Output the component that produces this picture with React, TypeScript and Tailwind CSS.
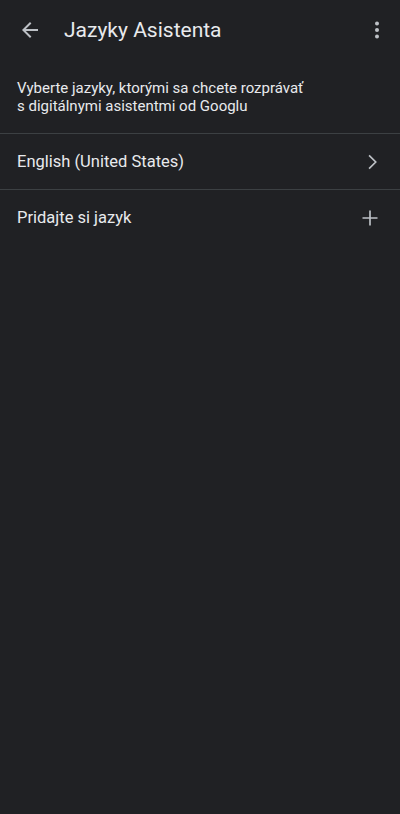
export default function App() {
  return (
    <div className="min-h-[814px] w-[400px] bg-[#202124] text-[#e8eaed] font-['Roboto',sans-serif]">
      {/* top bar */}
      <div className="flex h-[60px] items-center pl-[18px] pr-[11px]">
        <svg width="24" height="24" viewBox="0 0 24 24" fill="#bdc1c6">
          <path d="M20 11H7.83l5.59-5.59L12 4l-8 8 8 8 1.41-1.41L7.83 13H20v-2z" />
        </svg>
        <h1 className="ml-[22px] flex-1 text-[21px] leading-[24px] text-[#e8eaed]">Jazyky Asistenta</h1>
        <svg width="24" height="24" viewBox="0 0 24 24" fill="#bdc1c6">
          <circle cx="12" cy="5.5" r="2" />
          <circle cx="12" cy="12" r="2" />
          <circle cx="12" cy="18.5" r="2" />
        </svg>
      </div>

      <p className="px-[17px] pt-[19px] pb-[18px] text-[15px] leading-[18px] text-[#e8eaed]">
        Vyberte jazyky, ktorými sa chcete rozprávať
        <br />s digitálnymi asistentmi od Googlu
      </p>

      <div className="border-t border-[#3c4043]" />
      <div className="flex h-[55px] items-center justify-between pl-[17px] pr-[18px] pt-[1px]">
        <span className="text-[16.5px] text-[#e8eaed]">English (United States)</span>
        <svg width="20" height="20" viewBox="0 0 24 24" fill="none" stroke="#bdc1c6" strokeWidth="2">
          <path d="M8.5 4l8 8-8 8" />
        </svg>
      </div>
      <div className="border-t border-[#3c4043]" />
      <div className="flex h-[55px] items-center justify-between pl-[17px] pr-[20px] pt-[1px]">
        <span className="text-[16.5px] text-[#e8eaed]">Pridajte si jazyk</span>
        <svg width="20" height="20" viewBox="0 0 24 24" fill="none" stroke="#bdc1c6" strokeWidth="2">
          <path d="M12 3v18M3 12h18" />
        </svg>
      </div>
    </div>
  );
}
